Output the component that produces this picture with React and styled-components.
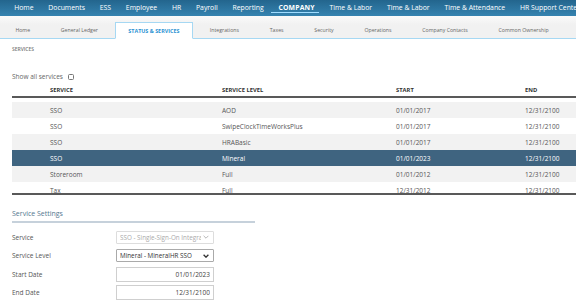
import React, { useState } from 'react'
import styled, { createGlobalStyle } from 'styled-components'

const GlobalStyle = createGlobalStyle`
  html, body {
    margin: 0;
    padding: 0;
    background: #fff;
    font-family: "Open Sans", "Liberation Sans", sans-serif;
    overflow: hidden;
  }
`

const navItems = ['Home', 'Documents', 'ESS', 'Employee', 'HR', 'Payroll', 'Reporting', 'COMPANY', 'Time & Labor', 'Time & Labor', 'Time & Attendance', 'HR Support Center']
const tabs = ['Home', 'General Ledger', 'STATUS & SERVICES', 'Integrations', 'Taxes', 'Security', 'Operations', 'Company Contacts', 'Common Ownership']

const services = [
  { service: 'SSO', level: 'AOD', start: '01/01/2017', end: '12/31/2100' },
  { service: 'SSO', level: 'SwipeClockTimeWorksPlus', start: '01/01/2017', end: '12/31/2100' },
  { service: 'SSO', level: 'HRABasic', start: '01/01/2017', end: '12/31/2100' },
  { service: 'SSO', level: 'Mineral', start: '01/01/2023', end: '12/31/2100' },
  { service: 'Storeroom', level: 'Full', start: '01/01/2012', end: '12/31/2100' },
  { service: 'Tax', level: 'Full', start: '12/31/2012', end: '12/31/2100' },
]

export default function App() {
  const [selected, setSelected] = useState(3)
  const [showAll, setShowAll] = useState(false)

  return (
    <Page>
      <GlobalStyle />
      <TopNav>
        {navItems.map((item, i) => (
          <NavItem key={item + i} $active={item === 'COMPANY'}>{item}</NavItem>
        ))}
      </TopNav>
      <SubTabs>
        {tabs.map(tab => (
          <SubTab key={tab} $active={tab === 'STATUS & SERVICES'}>{tab}</SubTab>
        ))}
      </SubTabs>

      <Content>
        <SectionLabel>Services</SectionLabel>
        <ShowAll>
          Show all services
          <Check type="checkbox" checked={showAll} onChange={() => setShowAll(v => !v)} />
        </ShowAll>

        <Table>
          <HeadRow>
            <span>Service</span>
            <span>Service Level</span>
            <span>Start</span>
            <span>End</span>
          </HeadRow>
          <Body>
            {services.map((row, i) => (
              <Row key={i} $odd={i % 2 === 0} $selected={i === selected} onClick={() => setSelected(i)}>
                <span>{row.service}</span>
                <span>{row.level}</span>
                <span>{row.start}</span>
                <span>{row.end}</span>
              </Row>
            ))}
          </Body>
        </Table>

        <SettingsTitle>Service Settings</SettingsTitle>
        <Form>
          <Label>Service</Label>
          <SelectWrap $disabled>
            <Select disabled defaultValue="sso">
              <option value="sso">SSO - Single-Sign-On Integration</option>
            </Select>
            <Chevron />
          </SelectWrap>

          <Label>Service Level</Label>
          <SelectWrap>
            <Select defaultValue="mineral">
              <option value="mineral">Mineral - MineralHR SSO</option>
            </Select>
            <Chevron bold />
          </SelectWrap>

          <Label>Start Date</Label>
          <DateInput readOnly value="01/01/2023" />

          <Label>End Date</Label>
          <DateInput readOnly value="12/31/2100" />
        </Form>
      </Content>
    </Page>
  )
}

function Chevron({ bold }) {
  return (
    <ChevronIcon viewBox="0 0 10 6" width="6" height="4">
      <path d="M1 1 L5 5 L9 1" fill="none" stroke="currentColor" strokeWidth={bold ? 2.2 : 1.4} />
    </ChevronIcon>
  )
}

const Page = styled.div`
  width: 576px;
  height: 301px;
  overflow: hidden;
  font-size: 7px;
`

const TopNav = styled.nav`
  display: flex;
  align-items: center;
  height: 16px;
  padding-left: 6.8px;
  background: linear-gradient(#23658d, #3583b0);
  white-space: nowrap;
`

const NavItem = styled.a`
  position: relative;
  padding: 0 7.4px;
  font-size: 6.85px;
  line-height: 16px;
  color: #fff;
  font-weight: ${p => (p.$active ? 700 : 500)};
  letter-spacing: ${p => (p.$active ? '0.15px' : '0')};
  &::after {
    content: '';
    display: ${p => (p.$active ? 'block' : 'none')};
    position: absolute;
    left: 0;
    right: 3px;
    bottom: 3px;
    height: 1px;
    background: #9fdcff;
  }
`

const SubTabs = styled.div`
  display: flex;
  align-items: flex-end;
  height: 22px;
  background: linear-gradient(#fafafa, #f1f1f1 40%);
  border-bottom: 1px solid #a6d8f3;
  white-space: nowrap;
`

const SubTab = styled.div`
  height: 15px;
  line-height: 17px;
  padding: 0 ${p => (p.$active ? '12.5px' : '14.4px')};
  margin: ${p => (p.$active ? '0 1.5px -1px' : '0')};
  font-size: ${p => (p.$active ? '5.4px' : '5.2px')};
  font-weight: ${p => (p.$active ? 700 : 400)};
  color: ${p => (p.$active ? '#2c93d3' : '#666')};
  background: ${p => (p.$active ? '#fff' : 'transparent')};
  border: 1px solid ${p => (p.$active ? '#a6d8f3' : 'transparent')};
  border-bottom-color: ${p => (p.$active ? '#fff' : 'transparent')};
`

const Content = styled.div`
  padding-left: 12px;
`

const SectionLabel = styled.div`
  margin-top: 7px;
  font-size: 5px;
  font-weight: 600;
  text-transform: uppercase;
  color: #777;
  line-height: 6px;
`

const ShowAll = styled.label`
  display: flex;
  align-items: center;
  margin-top: 20px;
  font-size: 6.5px;
  color: #666;
  height: 9px;
`

const Check = styled.input`
  appearance: none;
  width: 6px;
  height: 6px;
  margin: 0 0 0 5px;
  border: 1px solid #777;
  border-radius: 1.5px;
  background: #fff;
`

const Table = styled.div`
  margin-top: 2px;
`

const columns = `
  display: grid;
  grid-template-columns: 172px 174px 129px 1fr;
  padding-left: 38px;
  align-items: center;
  white-space: nowrap;
`

const HeadRow = styled.div`
  ${columns}
  height: 13px;
  font-size: 5.8px;
  font-weight: 700;
  text-transform: uppercase;
  color: #333;
  border-bottom: 2px solid #595959;
`

const Body = styled.div`
  height: 91px;
  padding-top: 4px;
  overflow: hidden;
  border-bottom: 2px solid #595959;
`

const Row = styled.div`
  ${columns}
  height: 16px;
  font-size: 6.5px;
  color: ${p => (p.$selected ? '#fff' : '#555')};
  background: ${p => (p.$selected ? '#3f6480' : p.$odd ? '#f2f2f2' : '#fff')};
  cursor: pointer;
`

const SettingsTitle = styled.div`
  margin-top: 14px;
  width: 243px;
  padding-bottom: 3px;
  font-size: 7px;
  color: #54788f;
  border-bottom: 2px solid #c6d1db;
`

const Form = styled.div`
  display: grid;
  grid-template-columns: 104px 98px;
  grid-auto-rows: 18.5px;
  align-items: center;
  margin-top: 5px;
`

const Label = styled.div`
  font-size: 6.5px;
  color: #555;
`

const SelectWrap = styled.div`
  position: relative;
  height: 13px;
  color: ${p => (p.$disabled ? '#aaa' : '#333')};
`

const Select = styled.select`
  display: block;
  box-sizing: border-box;
  appearance: none;
  width: 100%;
  height: 13px;
  margin: 0;
  padding: 0 12px 0 3px;
  font-family: inherit;
  font-size: 6.3px;
  color: inherit;
  background: #fff;
  border: 1px solid ${p => (p.disabled ? '#ddd' : '#aaa')};
  border-radius: 1px;
  outline: none;
  &:disabled {
    opacity: 1;
  }
`

const ChevronIcon = styled.svg`
  position: absolute;
  right: 5px;
  top: 4.5px;
  pointer-events: none;
`

const DateInput = styled.input`
  display: block;
  box-sizing: border-box;
  width: 98px;
  height: 15px;
  margin: 0;
  padding: 0 3px;
  font-family: inherit;
  font-size: 6.5px;
  color: #444;
  text-align: right;
  border: 1px solid #cfcfcf;
  outline: none;
`
